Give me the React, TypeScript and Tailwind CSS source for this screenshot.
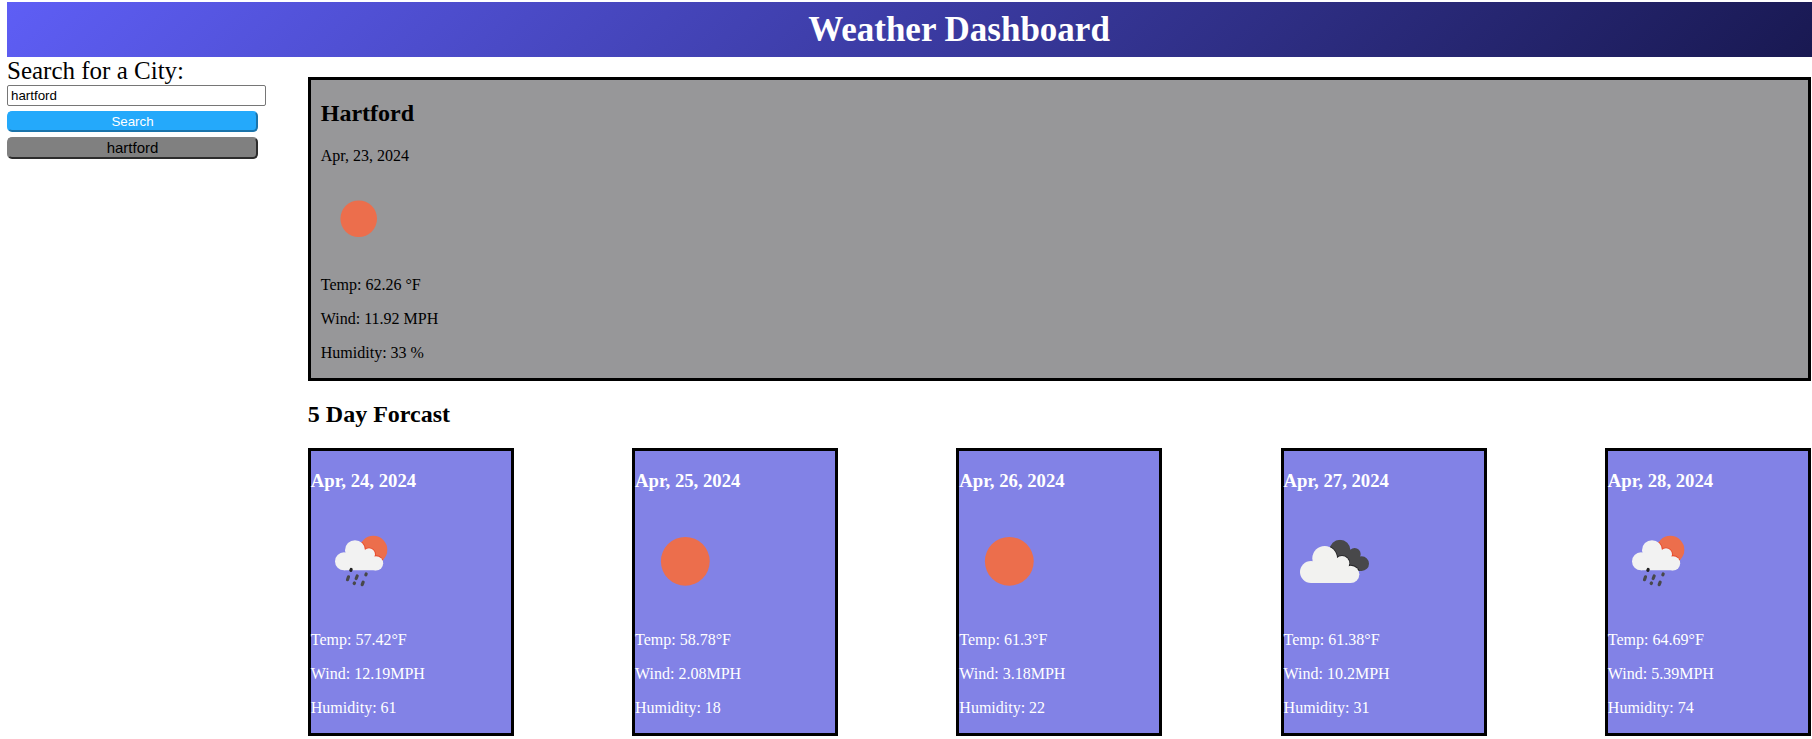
type IconName = 'sun' | 'rain' | 'clouds';

interface Day {
  date: string;
  icon: IconName;
  temp: string;
  wind: string;
  humidity: string;
}

const days: Day[] = [
  { date: 'Apr, 24, 2024', icon: 'rain', temp: '57.42', wind: '12.19', humidity: '61' },
  { date: 'Apr, 25, 2024', icon: 'sun', temp: '58.78', wind: '2.08', humidity: '18' },
  { date: 'Apr, 26, 2024', icon: 'sun', temp: '61.3', wind: '3.18', humidity: '22' },
  { date: 'Apr, 27, 2024', icon: 'clouds', temp: '61.38', wind: '10.2', humidity: '31' },
  { date: 'Apr, 28, 2024', icon: 'rain', temp: '64.69', wind: '5.39', humidity: '74' },
];

function SmallCloud() {
  return (
    <>
      <circle cx="165" cy="120.500" r="30" />
      <circle cx="132" cy="154" r="27" />
      <circle cx="207" cy="133" r="18" />
      <circle cx="228" cy="160" r="21.500" />
      <path d="M132 181V145L150 120L195 122L228 145V181Z" />
    </>
  );
}

function LargeCloud() {
  return (
    <>
      <circle cx="164" cy="355" r="37" />
      <circle cx="123" cy="396" r="33" />
      <circle cx="216" cy="370" r="22" />
      <circle cx="242" cy="403" r="26" />
      <path d="M123 429V380L150 350L200 355L242 385V429Z" />
    </>
  );
}

function WeatherIcon({ name, className }: { name: IconName; className: string }) {
  if (name === 'sun') {
    return (
      <svg className={className} viewBox="0 0 100 100">
        <circle cx="50.300" cy="50.300" r="24.400" fill="#ec6e4c" />
      </svg>
    );
  }
  if (name === 'rain') {
    return (
      <svg className={className} viewBox="33 3 300 300">
        <defs>
          <clipPath id="rain-sun">
            <circle cx="220" cy="119.500" r="42" />
          </clipPath>
        </defs>
        <circle cx="220" cy="119.500" r="42" fill="#ec6e4c" />
        <g clipPath="url(#rain-sun)" fill="#e8492a" stroke="#e8492a" strokeWidth="5">
          <SmallCloud />
        </g>
        <g fill="#f2f2f2">
          <SmallCloud />
        </g>
        <g stroke="#48484a" strokeWidth="9.500" strokeLinecap="round">
          <path d="M152.500 181L153.500 178.500" stroke="#222" />
          <path d="M142.500 209L145.500 200.500" />
          <path d="M168.500 205.500L171.500 198" />
          <path d="M197.500 194.500L198.500 192" />
          <path d="M162.500 220.500L163.500 219" />
          <path d="M186.500 224L189.500 216.500" />
        </g>
      </svg>
    );
  }
  return (
    <svg className={className} viewBox="42 213 300 300">
      <defs>
        <clipPath id="rear-cloud">
          <circle cx="210" cy="330" r="31" />
          <circle cx="254" cy="342" r="18" />
          <circle cx="275" cy="371" r="22" />
          <path d="M180 330H254L275 355V393H210Z" />
        </clipPath>
      </defs>
      <g clipPath="url(#rear-cloud)">
        <path d="M170 290H310V400H170Z" fill="#48484a" />
        <g fill="#222224" stroke="#222224" strokeWidth="5">
          <LargeCloud />
        </g>
      </g>
      <g fill="#f2f2f0">
        <LargeCloud />
      </g>
    </svg>
  );
}

function DayCard({ day }: { day: Day }) {
  return (
    <article className="h-[288px] w-[206px] border-[3px] border-black bg-[#8282e6] text-white">
      <h3 className="mt-[19px] text-[18.72px] leading-[21px] font-bold">{day.date}</h3>
      <WeatherIcon name={day.icon} className="mt-5 block size-[100px]" />
      <p className="mt-5">Temp: {day.temp}°F</p>
      <p className="mt-4">Wind: {day.wind}MPH</p>
      <p className="mt-4">Humidity: {day.humidity}</p>
    </article>
  );
}

export default function App() {
  return (
    <div className="h-[739px] overflow-hidden bg-white pt-0.5 pl-[7px] font-['Liberation_Serif','Times_New_Roman',serif] text-base leading-[18px] text-black">
      <header className="w-[1904px] bg-[linear-gradient(135deg,#5e5ef5,#151549)] text-center">
        <h1 className="text-[35px] leading-[55px] font-bold text-white">Weather Dashboard</h1>
      </header>
      <div className="flex">
        <aside className="flex w-[300.8px] shrink-0 flex-col items-start font-['Liberation_Sans',Arial,sans-serif]">
          <label
            htmlFor="city"
            className="font-['Liberation_Serif','Times_New_Roman',serif] text-[25px] leading-[28px]"
          >
            Search for a City:
          </label>
          <input
            id="city"
            defaultValue="hartford"
            className="h-[21px] w-[259px] rounded-[2px] border border-[#767676] bg-white px-[3px] text-[13.333px]"
          />
          <button className="mt-[5px] h-[21px] w-[251px] rounded-[5px] border-2 border-t-[#24a9fb] border-r-[#1b74ab] border-b-[#1b74ab] border-l-[#24a9fb] bg-[#24a9fb] text-[13.333px] leading-[17px] text-white">
            Search
          </button>
          <button className="mt-[5px] h-[22px] w-[251px] rounded-[5px] border-2 border-t-[#808080] border-r-[#2c2c2c] border-b-[#2c2c2c] border-l-[#808080] bg-[#808080] text-[15px] leading-[18px]">
            hartford
          </button>
        </aside>
        <main className="w-[1503.1px] shrink-0 pt-5">
          <section className="h-[304px] border-[3px] border-black bg-[#979799] pl-2.5">
            <h2 className="mt-5 text-2xl leading-[27px] font-bold">Hartford</h2>
            <p className="mt-5">Apr, 23, 2024</p>
            <WeatherIcon name="sun" className="mt-4 block size-[75px]" />
            <p className="mt-5">Temp: 62.26 °F</p>
            <p className="mt-4">Wind: 11.92 MPH</p>
            <p className="mt-4">Humidity: 33 %</p>
          </section>
          <h2 className="my-5 text-2xl leading-[27px] font-bold">5 Day Forcast</h2>
          <div className="flex justify-between">
            {days.map((day) => (
              <DayCard key={day.date} day={day} />
            ))}
          </div>
        </main>
      </div>
    </div>
  );
}
